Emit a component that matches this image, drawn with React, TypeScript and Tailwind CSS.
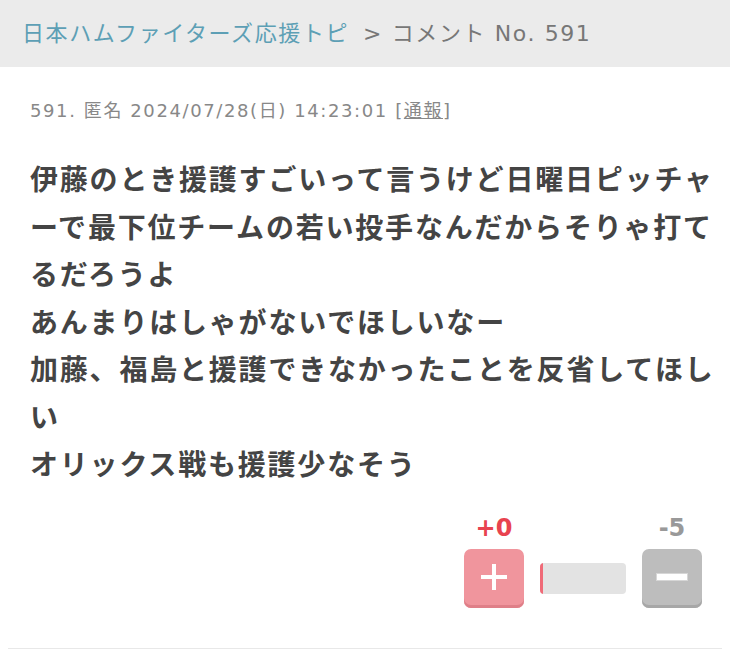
const font = { fontFamily: '"DejaVu Sans", "Noto Sans CJK JP", sans-serif' };
const bodyFont = { fontFamily: '"Noto Sans CJK JP", "Noto Sans", sans-serif' };

const lines = [
  '伊藤のとき援護すごいって言うけど日曜日ピッチャーで最下位チームの若い投手なんだからそりゃ打てるだろうよ',
  'あんまりはしゃがないでほしいなー',
  '加藤、福島と援護できなかったことを反省してほしい',
  'オリックス戦も援護少なそう',
];

function VoteBox() {
  return (
    <div className="flex items-end justify-end gap-4 pr-[20px]">
      <div className="flex w-[60px] flex-col items-center">
        <span className="text-[24px] font-bold leading-none text-[#e8434f]">+0</span>
        <button
          type="button"
          className="relative mt-[9px] h-[59px] w-[60px] rounded-[7px] bg-[#f0959d] shadow-[inset_0_-3px_0_#df7f88]"
        >
          <span className="absolute left-[17px] top-[26px] h-[4px] w-[26px] bg-white" />
          <span className="absolute left-[28px] top-[15px] h-[26px] w-[4px] bg-white" />
        </button>
      </div>
      <div className="mb-[14px] flex h-[31px] w-[86px] overflow-hidden rounded-[4px] bg-[#e3e3e3]">
        <div className="w-[3px] bg-[#f06b78]" />
      </div>
      <div className="flex w-[60px] flex-col items-center">
        <span className="text-[24px] font-bold leading-none text-[#999]">-5</span>
        <button
          type="button"
          className="relative mt-[9px] h-[59px] w-[60px] rounded-[7px] bg-[#bdbdbd] shadow-[inset_0_-3px_0_#a7a7a7]"
        >
          <span className="absolute left-[15px] top-[25px] h-[6px] w-[30px] bg-white shadow-[0_0_0_1px_#d6d6d6]" />
        </button>
      </div>
    </div>
  );
}

export default function App() {
  return (
    <div className="h-[649px] w-[730px] overflow-hidden bg-white" style={font}>
      <nav className="flex h-[67px] items-center bg-[#ebebeb] pl-[22px] text-[22px] tracking-[1.6px]">
        <a href="#" className="text-[#5d9fb5]">
          日本ハムファイターズ応援トピ
        </a>
        <span className="ml-[14px] text-[#777]">&gt; コメント No. 591</span>
      </nav>

      <div className="mx-[8px] border-b-2 border-[#e8e8e8] pb-[40px]">
        <p className="pl-[22px] pt-[31px] text-[18px] leading-[26px] tracking-[1.6px] text-[#888]">
          591. 匿名 2024/07/28(日) 14:23:01 [<span className="underline">通報</span>]
        </p>

        <div
          className="pl-[22px] pr-[2px] pt-[31px] text-[28px] font-bold leading-[47.5px] tracking-[1.8px] text-[#444]"
          style={bodyFont}
        >
          {lines.map((line) => (
            <p key={line}>{line}</p>
          ))}
        </div>

        <div className="mt-[28px]">
          <VoteBox />
        </div>
      </div>
    </div>
  );
}
